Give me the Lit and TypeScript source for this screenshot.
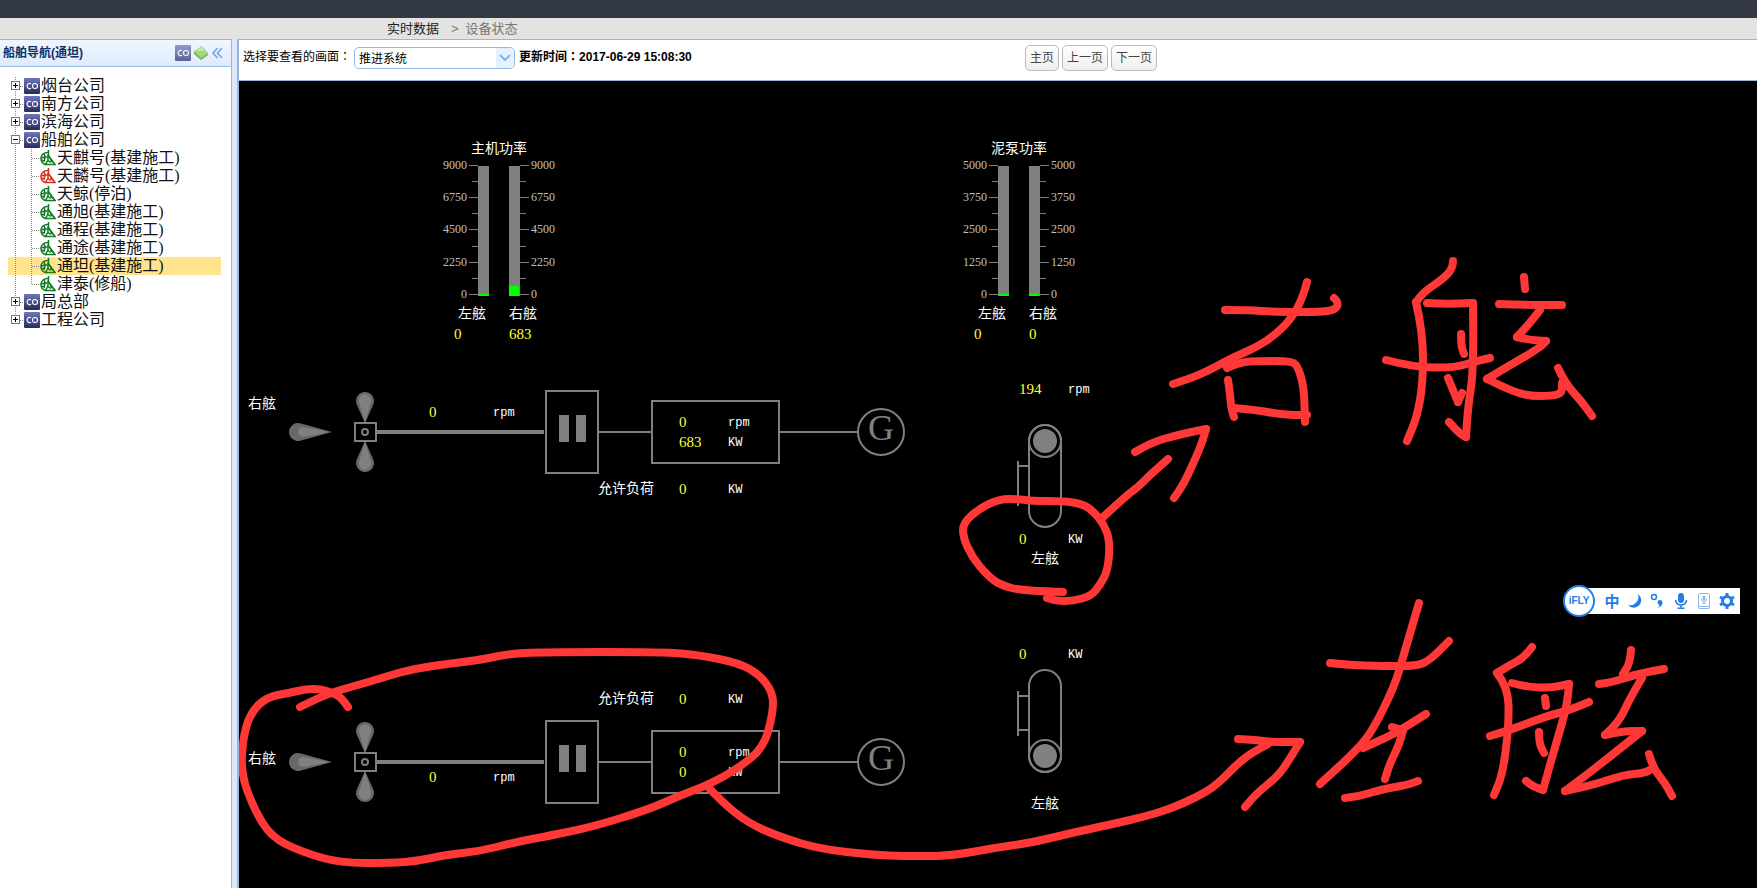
import { LitElement, html, svg, css } from "lit";
import { customElement, property } from "lit/decorators.js";
import { classMap } from "lit/directives/class-map.js";

type Point = [number, number];
interface Sketch { x: number; y: number; sx: number; sy: number; lines: Point[][]; }

const SKETCHES: Sketch[] = [
  { x: 950, y: 370, sx: 1 / 3, sy: 1 / 3, lines: [
    [[340,665],[220,663],[150,645],[110,615],[65,560],[40,500],[40,460],[90,415],[150,388],[200,386],[250,392],[340,392],[400,402],[432,427],[458,460],[480,510],[475,600],[450,645],[422,677],[370,693],[320,692],[292,684]],
    [[455,445],[530,375],[560,355],[600,315],[655,268]],
    [[555,245],[600,220],[680,195],[768,177]],
    [[768,177],[760,212],[730,282],[700,345],[672,383]],
  ] },
  { x: 1160, y: 250, sx: 1 / 3, sy: 1 / 3, lines: [
    [[195,181],[270,180],[340,186],[500,186],[532,174],[534,155],[521,144]],
    [[441,95],[430,140],[395,205],[345,255],[290,290],[215,325],[120,375],[40,403]],
    [[202,355],[240,337],[300,332],[395,332],[415,350],[432,410],[434,517]],
    [[204,390],[210,430],[212,470],[222,502]],
    [[222,475],[290,480],[370,495],[440,495]],
    [[878,34],[880,55],[850,88],[795,122],[768,155]],
    [[768,155],[788,250],[790,400],[770,500],[741,572]],
    [[802,159],[850,161],[940,158]],
    [[940,158],[942,350],[925,470],[918,562]],
    [[918,562],[902,554],[867,517]],
    [[903,253],[904,285],[912,312]],
    [[678,331],[760,351],[880,354],[950,332],[990,324]],
    [[863,384],[893,455]],[[893,455],[905,430]],
    [[1092,82],[1096,117]],
    [[1017,163],[1080,166],[1205,164]],
    [[1140,180],[1110,220],[1070,260]],[[1070,260],[1110,270],[1158,272]],
    [[1158,272],[1150,288],[1040,350],[980,386]],
    [[980,386],[1040,418],[1105,438],[1175,438],[1205,428],[1207,400]],
    [[1193,355],[1215,400],[1265,455],[1295,498]],
  ] },
  { x: 1240, y: 570, sx: 1 / 3, sy: 1 / 3, lines: [
    [[270,278],[320,286],[430,287],[530,288],[570,270],[628,214]],
    [[537,98],[490,260],[465,345],[400,480],[350,540],[240,643]],
    [[368,533],[450,497],[500,468],[558,433]],
    [[455,470],[490,480]],[[490,480],[480,520],[450,580],[435,627]],
    [[315,684],[350,680],[430,658],[500,646],[535,634]],
    [[875,230],[855,260],[810,285],[770,310]],
    [[770,310],[805,350],[808,460],[790,610],[763,674]],
    [[817,338],[860,352],[930,353],[986,341]],
    [[986,341],[985,400],[945,530],[910,660]],
    [[910,660],[882,652],[857,634]],
    [[914,384],[919,408]],
    [[750,497],[800,482],[920,438],[980,424],[1048,396]],
    [[896,485],[897,520],[911,549]],
    [[1173,239],[1170,280],[1148,312]],
    [[1077,342],[1110,338],[1190,312],[1272,297]],
    [[1206,324],[1170,385],[1140,450],[1095,496]],
    [[1095,496],[1150,484],[1207,482]],
    [[1207,482],[1160,520],[1060,600],[975,663]],
    [[975,663],[1050,648],[1150,616],[1215,608],[1238,595]],
    [[1227,551],[1240,595],[1275,640],[1295,677]],
  ] },
  { x: 235, y: 640, sx: 1 / 2.24, sy: 1 / 3, lines: [
    [[252,200],[240,175],[215,155],[190,147],[160,148],[120,160],[72,170],[35,215],[18,290],[14,400],[40,500],[80,590],[150,635],[235,669],[350,669],[410,664],[470,645],[550,632],[630,606],[700,588],[800,562],[930,508],[1000,465],[1060,435],[1130,385],[1185,320],[1204,220],[1204,160],[1175,105],[1130,70],[1040,44],[960,36],[690,36],[610,42],[550,60],[400,85],[300,125],[210,160],[145,200]],
    [[1060,440],[1090,485],[1150,550],[1220,590],[1310,627],[1430,644],[1500,649],[1568,649]],
  ] },
  { x: 940, y: 630, sx: 1 / 3, sy: 1 / 3, lines: [
    [[-15,678],[50,676],[160,655],[270,640],[420,602],[520,582],[610,562],[690,538],[770,500],[830,465],[910,385],[985,342]],
    [[893,326],[950,330],[990,336],[1080,336]],
    [[1080,336],[1045,395],[1010,440],[950,490],[914,532]],
  ] },
];

/* Rounds the corners of a hand-drawn line by curving through segment midpoints. */
function smooth(s: Sketch, line: Point[]): string {
  const p = line.map(([x, y]) => [Math.round(s.x + x * s.sx), Math.round(s.y + y * s.sy)]);
  let d = `M${p[0][0]} ${p[0][1]}`;
  for (let i = 1; i < p.length - 1; i++) {
    d += `Q${p[i][0]} ${p[i][1]} ${(p[i][0] + p[i + 1][0]) / 2} ${(p[i][1] + p[i + 1][1]) / 2}`;
  }
  const e = p[p.length - 1];
  return d + `L${e[0]} ${e[1]}`;
}

const coIcon = html`<svg class="ico" viewBox="0 0 16 16" aria-hidden="true">
  <defs><linearGradient id="co" x1="0" y1="0" x2="0" y2="1"><stop offset="0" stop-color="#6f76b8"/><stop offset="1" stop-color="#262a62"/></linearGradient></defs>
  <rect width="16" height="16" rx="1" fill="url(#co)"/>
  <path d="M7 5.8a2.6 2.6 0 1 0 0 4.4" fill="none" stroke="#fff" stroke-width="1.1"/>
  <circle cx="11" cy="8" r="2.5" fill="none" stroke="#fff" stroke-width="1.1"/></svg>`;

const shipIcon = (color: string) => html`<svg class="ico" viewBox="0 0 16 16" aria-hidden="true">
  <g fill="none" stroke=${color} stroke-width="1.5">
    <path d="M8.5 2.5C4 2 1 5 1 8.500C1 12 3 14 6 14.500"/>
    <path d="M4 3l1 4-4 1M5 7h4M5 7l-1 5M1 10.500h4M8.500 0v7"/>
    <path d="M7.500 4.500L15 14.500H5.500L8 10M8 7.500v3l3 2"/></g>
  <path d="M9 5.500l5.500 8-4-2z" fill=${color}/></svg>`;

@customElement("tree-row")
class TreeRow extends LitElement {
  @property() label = "";
  @property() kind = "company";
  @property({ type: Boolean }) open = false;
  @property({ type: Boolean }) selected = false;
  @property({ type: Boolean }) last = false;

  static styles = css`
    :host { display: block; }
    .row { display: flex; height: 18px; align-items: center; }
    .selected { background: #ffe38d; }
    .ico { width: 16px; height: 16px; flex: none; }
    .guide { width: 16px; height: 18px; flex: none; display: block; }
    .toggle { padding: 0; border: 0; background: none; width: 16px; height: 18px; flex: none; }
    .name { color: #111; text-decoration: none; margin-left: 1px; white-space: nowrap;
      font: 16px/18px "Liberation Serif", "Noto Sans CJK SC", serif; }
  `;

  render() {
    const down = this.last && this.kind === "company" ? 9 : 18;
    const trunk = svg`<path d=${`M7.5 0V${down}`} stroke="#888" stroke-dasharray="1 1" />`;
    const company = this.kind === "company";
    return html`<div class=${classMap({ row: true, selected: this.selected })}>
      ${company
        ? html`<button class="toggle" aria-label=${this.open ? "收起" : "展开"}><svg class="guide" viewBox="0 0 16 18">
            ${trunk}<path d="M12 9.500h4" stroke="#888" stroke-dasharray="1 1"/>
            <rect x="3.500" y="4.500" width="8" height="8" fill="#fff" stroke="#777"/>
            <path d=${this.open ? "M5 8.5h5" : "M5 8.5h5M7.5 6v5"} stroke="#000"/></svg></button>${coIcon}`
        : html`<svg class="guide" viewBox="0 0 16 18">${trunk}</svg><svg class="guide" viewBox="0 0 16 18">
            <path d=${`M7.500 0V${this.last ? 9 : 18}M8 9.500h7`} fill="none" stroke="#888" stroke-dasharray="1 1"/></svg>
            ${shipIcon(this.kind === "alert" ? "#d2301c" : "#127a25")}`}
      <a class="name" href="#">${this.label}</a></div>`;
  }
}

@customElement("ship-diagram")
class ShipDiagram extends LitElement {
  static styles = css`
    :host { display: block; height: 100%; }
    .canvas { display: block; width: 100%; height: 100%; background: #000; }
    .zh { font: 14px "Noto Sans CJK SC", sans-serif; fill: #fff; }
    .val { font: 15px "Liberation Serif", serif; fill: #ff3; }
    .unit { font: 12px "Liberation Mono", monospace; fill: #fff; }
    .scale { font: 12px "Liberation Serif", serif; fill: #c0c0c0; }
    .end { text-anchor: end; }
    .gen { font: 36px "Liberation Serif", serif; fill: #808080; text-anchor: middle; }
    .line { fill: none; stroke: #808080; stroke-width: 2; }
    .shaft { stroke: #808080; stroke-width: 4; }
    .solid { fill: #808080; }
    .blade { fill: #686868; }
    .fill { fill: #0f0; }
    .ink { fill: none; stroke: #ff3737; stroke-width: 8; stroke-linecap: round; stroke-linejoin: round; }
  `;

  private gauge(x: number, title: string, max: number, left: number, right: number) {
    const bar = (v: number) => Math.max(2, Math.round((v / max) * 129));
    return svg`<g transform=${`translate(${x} 0)`}>
      <text class="zh" x="41" y="153">${title}</text>
      <rect class="solid" x="48" y="166" width="11" height="130"/>
      <rect class="solid" x="79" y="166" width="11" height="130"/>
      <rect class="fill" x="49" y=${296 - bar(left)} width="10" height=${bar(left)}/>
      <rect class="fill" x="79" y=${296 - bar(right)} width="10" height=${bar(right)}/>
      ${[0, 1, 2, 3, 4, 5, 6, 7, 8].map((i) => {
        const y = Math.round(165 + i * 16.1);
        const major = i % 2 === 0;
        return svg`<rect class="solid" x=${major ? 39 : 42} y=${y} width=${major ? 9 : 6} height="1"/>
          <rect class="solid" x="90" y=${y} width=${major ? 9 : 6} height="1"/>
          ${major ? svg`<text class="scale end" x="37" y=${y + 4}>${max * (8 - i) / 8}</text>
            <text class="scale" x="101" y=${y + 4}>${max * (8 - i) / 8}</text>` : ""}`;
      })}
      <text class="zh" x="28" y="318">左舷</text><text class="zh" x="79" y="318">右舷</text>
      <text class="val" x="24" y="339">${left}</text><text class="val" x="79" y="339">${right}</text>
    </g>`;
  }

  private blade(x: number, y: number, turn: number) {
    return svg`<g transform=${`translate(${x} ${y}) rotate(${turn})`}>
      <path class="blade" d="M0 0L-8.500 -19A9 9 0 1 1 8.500 -19Z"/>
      <path class="solid" d="M0 0L-5 -18A6 7 0 1 1 5 -18Z"/></g>`;
  }

  private drive(y: number, power: number) {
    return svg`<g transform=${`translate(0 ${y})`}>
      ${this.blade(365, -9, 0)}${this.blade(365, 9, 180)}
      <g transform="translate(332 0) rotate(-90)">
        <path class="blade" d="M0 0L-8.500 -31A9 9 0 1 1 8.500 -31Z"/><path class="solid" d="M0 -3L-5 -29A5 5 0 1 1 5 -29Z"/></g>
      <rect class="line" x="355" y="-9" width="21" height="18"/><circle class="line" cx="365" cy="0" r="3"/>
      <path class="shaft" d="M377 0H544"/>
      <rect class="line" x="546" y="-41" width="52" height="82"/>
      <rect class="solid" x="559" y="-17" width="10" height="27"/><rect class="solid" x="576" y="-17" width="10" height="27"/>
      <path class="line" d="M599 0H652M780 0H858"/>
      <rect class="line" x="652" y="-31" width="127" height="62"/>
      <circle class="line" cx="881" cy="0" r="23"/><text class="gen" x="881" y="8">G</text>
      <text class="val" x="679" y="-5">0</text><text class="unit" x="728" y="-6">rpm</text>
      <text class="val" x="679" y="15">${power}</text><text class="unit" x="728" y="14">KW</text>
    </g>`;
  }

  private pump(top: number, head: number, bracket: number) {
    return svg`<rect class="line" x="1029" y=${top} width="32" height="102" rx="16"/>
      <circle class="line" cx="1045" cy=${head} r="16"/><circle class="solid" cx="1045" cy=${head} r="12"/>
      <path class="line" d=${`M1018 ${bracket}v45M1018 ${bracket + 5}h11M1018 ${bracket + 39}h11`}/>`;
  }

  render() {
    return html`<svg class="canvas"><g transform="translate(-239 -81)">
      ${this.gauge(430, "主机功率", 9000, 0, 683)}
      ${this.gauge(950, "泥泵功率", 5000, 0, 0)}
      ${this.drive(432, 683)}${this.drive(762, 0)}
      ${this.pump(425, 441, 461)}${this.pump(670, 756, 691)}
      <text class="zh" x="248" y="408">右舷</text><text class="zh" x="248" y="763">右舷</text>
      <text class="val" x="429" y="417">0</text><text class="unit" x="493" y="416">rpm</text>
      <text class="val" x="429" y="782">0</text><text class="unit" x="493" y="781">rpm</text>
      <text class="zh" x="598" y="493">允许负荷</text><text class="val" x="679" y="494">0</text><text class="unit" x="728" y="493">KW</text>
      <text class="zh" x="598" y="703">允许负荷</text><text class="val" x="679" y="704">0</text><text class="unit" x="728" y="703">KW</text>
      <text class="val" x="1019" y="394">194</text><text class="unit" x="1068" y="393">rpm</text>
      <text class="val" x="1019" y="544">0</text><text class="unit" x="1068" y="543">KW</text>
      <text class="val" x="1019" y="659">0</text><text class="unit" x="1068" y="658">KW</text>
      <text class="zh" x="1031" y="563">左舷</text><text class="zh" x="1031" y="808">左舷</text>
      ${SKETCHES.map((s) => s.lines.map((l) => svg`<path class="ink" d=${smooth(s, l)}/>`))}
    </g></svg>`;
  }
}

@customElement("app-root")
class AppRoot extends LitElement {
  static styles = css`
    :host { display: flex; flex-direction: column; height: 100vh; overflow: hidden; background: #fff;
      font: 12px/18px "Liberation Sans", "Noto Sans CJK SC", sans-serif; color: #000; }
    * { box-sizing: border-box; }
    .top { height: 18px; flex: none; background: #323844; }
    .crumbs { height: 21px; flex: none; background: #e3e3e1; display: flex; align-items: center; gap: 12px;
      padding-left: 387px; font-size: 13px; color: #222; }
    .crumbs a { color: inherit; text-decoration: none; }
    .muted { color: #777; }
    .crumbs .tail { display: flex; gap: 7px; }
    .body { flex: 1; min-height: 0; display: flex; gap: 5px; background: #dfe8f6; }
    .side { width: 232px; flex: none; background: #fff; border: 1px solid #99b5dc; border-width: 1px 1px 0 0; }
    .head { height: 27px; display: flex; align-items: center; gap: 2px; padding: 0 4px 0 3px;
      border-bottom: 1px solid #99bbe8; background: linear-gradient(#f0f6ff, #deeafd); }
    .title { flex: 1; margin: 0; font-size: 12px; color: #0e2f63; }
    .tool { padding: 0; border: 0; background: none; width: 16px; height: 16px; }
    .tool svg { display: block; width: 16px; height: 16px; }
    .dim { opacity: 0.7; }
    .tree { list-style: none; margin: 0; padding: 10px 10px 0 8px; }
    .main { flex: 1; min-width: 0; display: flex; flex-direction: column; background: #fff;
      border: 1px solid #99b5dc; border-width: 1px 0 0 2px; }
    .bar { height: 41px; flex: none; display: grid; grid-template-columns: 786fr 732fr; align-items: start;
      border-bottom: 1px solid #99b5dc; }
    .filters { display: flex; gap: 4px; padding: 7px 0 0 4px; white-space: nowrap; }
    .filters label { width: 107px; }
    .colon { font-family: "Noto Sans CJK TC", sans-serif; }
    .pick { position: relative; width: 161px; height: 22px; }
    .pick select { appearance: none; width: 100%; height: 22px; border: 1px solid #95b8e7; border-radius: 5px;
      padding: 2px 4px 0; background: #fff; font: inherit; color: #000; }
    .arrow { position: absolute; right: 1px; top: 1px; width: 18px; height: 20px; background: #e6f1fd;
      border-radius: 0 4px 4px 0; pointer-events: none; }
    .time { font-weight: 700; }
    .pages { display: flex; gap: 3px; padding-top: 5px; }
    .pages button { height: 26px; padding: 0 4px; border: 1px solid #bbb; border-radius: 5px; color: #444;
      background: linear-gradient(#fff, #eee); font: inherit; }
    .stage { flex: 1; min-height: 0; position: relative; background: #000; }
    .ime { position: absolute; right: 17px; top: 504px; height: 32px; display: flex; align-items: center; }
    .logo { width: 32px; height: 32px; border: 2px solid #2280e4; border-radius: 50%; background: #fff; color: #2280e4;
      font-size: 10px; font-weight: 700; line-height: 28px; text-align: center; z-index: 1; }
    .keys { height: 26px; margin-left: -16px; padding: 0 4px 0 24px; background: #fff; display: flex; align-items: center; gap: 5px; }
    .keys button { width: 18px; height: 18px; padding: 0; border: 0; background: none; color: #2280e4;
      font: 700 15px/16px "Noto Sans CJK SC", sans-serif; }
    .keys svg { display: block; width: 18px; height: 18px; }
  `;

  private companies: [string, string, boolean?][] = [
    ["烟台公司", "company"], ["南方公司", "company"], ["滨海公司", "company"], ["船舶公司", "company", true],
    ["天麒号(基建施工)", "ship"], ["天麟号(基建施工)", "alert"], ["天鲸(停泊)", "ship"], ["通旭(基建施工)", "ship"],
    ["通程(基建施工)", "ship"], ["通途(基建施工)", "ship"], ["通坦(基建施工)", "ship"], ["津泰(修船)", "ship"],
    ["局总部", "company"], ["工程公司", "company"],
  ];

  render() {
    return html`
      <header class="top"></header>
      <nav class="crumbs"><a href="#">实时数据</a><span class="tail muted"><span>&gt;</span><span>设备状态</span></span></nav>
      <div class="body">
        <aside class="side">
          <div class="head"><h2 class="title">船舶导航(通坦)</h2>
            <button class="tool dim" aria-label="公司">${coIcon}</button>
            <button class="tool" aria-label="刷新"><svg viewBox="0 0 16 16"><path d="M1 6l8-5 6 7-7 5z" fill="#a3d67a"/><path d="M1 6l7 7v2L1 9zM8 13l7-5v2l-7 5z" fill="#6fb34c"/><path d="M3 6l6-4 3 4z" fill="#c5e8a8"/></svg></button>
            <button class="tool" aria-label="折叠"><svg viewBox="0 0 16 16"><path d="M6.500 3L2 8l4.500 5M11 3L6.500 8 11 13" fill="none" stroke="#6fa8e0" stroke-width="1.600"/></svg></button>
          </div>
          <ul class="tree">${this.companies.map(([label, kind, open]) => html`<li><tree-row .label=${label} .kind=${kind}
            .open=${!!open} .selected=${label.startsWith("通坦")} .last=${label === "津泰(修船)" || label === "工程公司"}></tree-row></li>`)}</ul>
        </aside>
        <main class="main">
          <div class="bar">
            <div class="filters"><label for="view">选择要查看的画面<span class="colon">：</span></label>
              <div class="pick"><select id="view"><option>推进系统</option></select>
                <svg class="arrow" viewBox="0 0 18 20"><path d="M4 7l5 5 5-5" fill="none" stroke="#86b4e8" stroke-width="2"/></svg></div>
              <span class="time">更新时间<span class="colon">：</span>2017-06-29 15:08:30</span></div>
            <div class="pages"><button>主页</button><button>上一页</button><button>下一页</button></div>
          </div>
          <div class="stage"><ship-diagram></ship-diagram>
            <div class="ime"><span class="logo">iFLY</span>
              <div class="keys"><button>中</button>
                <button aria-label="夜间"><svg viewBox="0 0 18 18"><path d="M12 2A7.500 7.500 0 1 1 2 13A8.500 8.500 0 0 0 12 2z" fill="#2280e4"/></svg></button>
                <button aria-label="标点"><svg viewBox="0 0 18 18"><circle cx="5" cy="5" r="2.500" fill="none" stroke="#2280e4" stroke-width="1.500"/><path d="M8 16c2-1 2.500-2 2.500-3a2.500 2.500 0 1 1 3-2.500c0 3-2 5-5.500 5.500z" fill="#2280e4"/></svg></button>
                <button aria-label="语音"><svg viewBox="0 0 18 18"><rect x="6" y="1" width="6" height="10" rx="3" fill="#2280e4"/><path d="M3.500 8a5.500 5 0 0 0 11 0M9 13v3M5.500 16.200h7" fill="none" stroke="#2280e4" stroke-width="1.600"/></svg></button>
                <button aria-label="手机"><svg viewBox="0 0 18 18" fill="none" stroke="#84b5ee"><rect x="3.500" y="1.500" width="11" height="15" rx="1"/><path d="M4 14.500h10M6.500 7a2.500 2.500 0 0 0 5 0M9 9.500v2M7.500 11.500h3"/><rect x="8" y="4" width="2" height="4" rx="1" fill="#84b5ee"/></svg></button>
                <button aria-label="设置"><svg viewBox="0 0 18 18"><circle cx="9" cy="9" r="4.500" fill="none" stroke="#2280e4" stroke-width="3"/><path d="M9 1v3M9 14v3M2 5l2.600 1.500M13.400 11.500L16 13M2 13l2.600-1.500M13.400 6.500L16 5" stroke="#2280e4" stroke-width="3"/></svg></button>
              </div></div>
          </div>
        </main>
      </div>`;
  }
}
